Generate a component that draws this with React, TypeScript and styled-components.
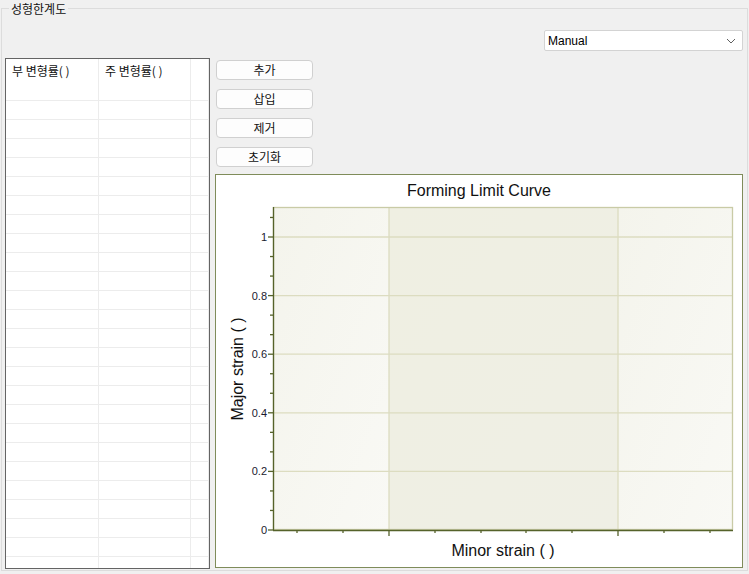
import styled, { createGlobalStyle } from "styled-components";

const GlobalStyle = createGlobalStyle`
  html, body {
    margin: 0;
    padding: 0;
    background: #f0f0f0;
    font-family: "Noto Sans CJK KR", "Liberation Sans", sans-serif;
  }
`;

const ROWS = 26;

const ticksX = [81, 127, 173, 219, 265, 310, 356, 402, 448, 494];
const majorX = [173, 402];
const yOf = (v: number) => 355 - v * 293;
const yLabels = [0, 0.2, 0.4, 0.6, 0.8, 1];

const App = () => {
  const minorY: number[] = [];
  for (let y = 355; y >= 32; y -= 293 / 15) minorY.push(y);

  return (
    <>
      <GlobalStyle />
      <GroupBox>
        <GroupTitle>성형한계도</GroupTitle>
        <TopRow>
          <Combo>
            <span>Manual</span>
            <svg width="10" height="6" viewBox="0 0 10 6">
              <path d="M1 1 L5 5 L9 1" fill="none" stroke="#606060" strokeWidth="1" />
            </svg>
          </Combo>
        </TopRow>
        <Main>
          <Table>
            <HeaderRow>
              <Cell>부 변형률( )</Cell>
              <Cell>주 변형률( )</Cell>
              <Cell />
            </HeaderRow>
            {Array.from({ length: ROWS }).map((_, i) => (
              <Row key={i}>
                <Cell />
                <Cell />
                <Cell />
              </Row>
            ))}
          </Table>
          <RightCol>
            <Buttons>
              <Button>추가</Button>
              <Button>삽입</Button>
              <Button>제거</Button>
              <Button>초기화</Button>
            </Buttons>
            <ChartBox>
              <svg width="526" height="392" viewBox="0 0 526 392">
                <defs>
                  <linearGradient id="side" x1="0" y1="0" x2="1" y2="1">
                    <stop offset="0" stopColor="#f4f4ec" />
                    <stop offset="1" stopColor="#f9f9f5" />
                  </linearGradient>
                  <linearGradient id="mid" x1="0" y1="0" x2="1" y2="1">
                    <stop offset="0" stopColor="#efefe2" />
                    <stop offset="1" stopColor="#efefe5" />
                  </linearGradient>
                </defs>
                <text x="263" y="21" textAnchor="middle" fontSize="16" fontFamily="Liberation Sans, sans-serif" fill="#111">
                  Forming Limit Curve
                </text>
                <rect x="57" y="32" width="116" height="323" fill="url(#side)" />
                <rect x="173" y="32" width="229" height="323" fill="url(#mid)" />
                <rect x="402" y="32" width="115" height="323" fill="url(#side)" />
                {yLabels.slice(1).map((v) => (
                  <line key={v} x1="57" x2="517" y1={yOf(v)} y2={yOf(v)} stroke="#dcdcc0" strokeWidth="1.3" />
                ))}
                {majorX.map((x) => (
                  <line key={x} x1={x} x2={x} y1="32" y2="355" stroke="#dcdcc0" strokeWidth="1.3" />
                ))}
                <rect x="57.5" y="32.5" width="459" height="322" fill="none" stroke="#c9cba6" strokeWidth="1.3" />
                <line x1="57.5" x2="57.5" y1="32" y2="355" stroke="#55622a" strokeWidth="1.3" />
                <line x1="57" x2="517" y1="355.5" y2="355.5" stroke="#55622a" strokeWidth="1.3" />
                {minorY.map((y, i) => (
                  <line key={i} x1={i % 3 === 0 ? 52 : 54} x2="57" y1={y} y2={y} stroke="#55622a" strokeWidth="1.3" />
                ))}
                {ticksX.map((x) => (
                  <line key={x} x1={x} x2={x} y1="355" y2={majorX.includes(x) ? 361 : 358} stroke="#55622a" strokeWidth="1.3" />
                ))}
                {yLabels.map((v) => (
                  <text key={v} x="51" y={yOf(v) + 4} textAnchor="end" fontSize="11" fontFamily="Liberation Sans, sans-serif" fill="#1a1a2e">
                    {v}
                  </text>
                ))}
                <text x="287" y="381" textAnchor="middle" fontSize="16" fontFamily="Liberation Sans, sans-serif" fill="#111">
                  Minor strain ( )
                </text>
                <text
                  x="0"
                  y="0"
                  textAnchor="middle"
                  fontSize="16"
                  fontFamily="Liberation Sans, sans-serif"
                  fill="#111"
                  transform="translate(27 194) rotate(-90)"
                >
                  Major strain ( )
                </text>
              </svg>
            </ChartBox>
          </RightCol>
        </Main>
      </GroupBox>
    </>
  );
};

export default App;

const GroupBox = styled.div`
  position: relative;
  box-sizing: border-box;
  margin: 8px 0 0 1px;
  width: 747px;
  height: 563px;
  border: 1px solid #dcdcdc;
  padding: 21px 4px 0 3px;
`;

const GroupTitle = styled.div`
  position: absolute;
  top: -8px;
  left: 7px;
  padding: 0 2px;
  background: #f0f0f0;
  font-size: 12px;
  line-height: 15px;
  color: #111;
`;

const TopRow = styled.div`
  display: flex;
  justify-content: flex-end;
  height: 21px;
`;

const Combo = styled.div`
  box-sizing: border-box;
  width: 199px;
  height: 21px;
  background: #fff;
  border: 1px solid #d3d3d3;
  border-radius: 2px;
  display: flex;
  align-items: center;
  justify-content: space-between;
  padding: 0 6px 0 3px;
  font-family: "Liberation Sans", sans-serif;
  font-size: 12px;
  color: #000;
`;

const Main = styled.div`
  display: flex;
  margin-top: 7px;
  gap: 5px;
`;

const Table = styled.div`
  box-sizing: border-box;
  width: 205px;
  height: 511px;
  border: 1px solid #646464;
  background: #fff;
  overflow: hidden;
`;

const HeaderRow = styled.div`
  display: grid;
  grid-template-columns: 93px 92px 1fr;
  height: 23px;
`;

const Row = styled.div`
  display: grid;
  grid-template-columns: 93px 92px 1fr;
  height: 18px;
  border-bottom: 1px solid #ececec;
`;

const Cell = styled.div`
  border-right: 1px solid #ececec;
  padding-left: 6px;
  font-size: 12px;
  line-height: 23px;
  color: #111;
  white-space: nowrap;
`;

const RightCol = styled.div`
  display: flex;
  flex-direction: column;
  width: 528px;
  padding-top: 2px;
`;

const Buttons = styled.div`
  display: flex;
  flex-direction: column;
  gap: 9px;
  margin-left: 1px;
`;

const Button = styled.button`
  box-sizing: border-box;
  width: 97px;
  height: 20px;
  padding: 0;
  background: #fdfdfd;
  border: 1px solid #d0d0d0;
  border-radius: 4px;
  font-family: "Noto Sans CJK KR", sans-serif;
  font-size: 12px;
  line-height: 18px;
  color: #111;
`;

const ChartBox = styled.div`
  box-sizing: border-box;
  margin-top: 7px;
  width: 528px;
  height: 394px;
  border: 1px solid #7f8c5a;
  background: #fff;
  line-height: 0;
`;
